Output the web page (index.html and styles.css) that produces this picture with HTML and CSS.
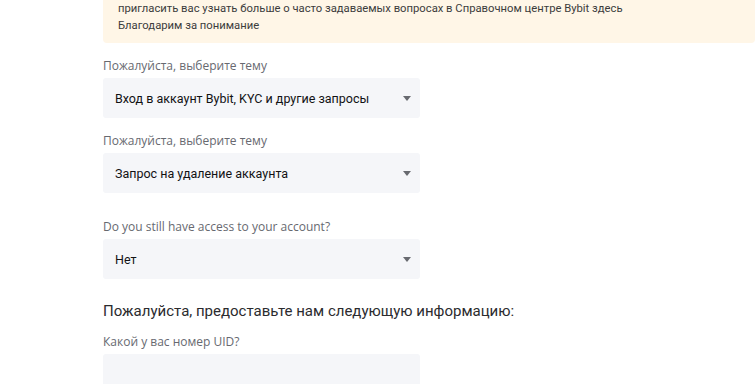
FILE: index.html
```html
<!DOCTYPE html>
<html lang="ru">
<head>
  <meta charset="UTF-8" />
  <title>Bybit — запрос в поддержку</title>
  <link rel="stylesheet" href="styles.css">
</head>
<body>
  <div class="page">
    <div class="notice">
      <p>пригласить вас узнать больше о часто задаваемых вопросах в Справочном центре Bybit здесь</p>
      <p>Благодарим за понимание</p>
    </div>

    <form class="form">
      <div class="field">
        <label>Пожалуйста, выберите тему</label>
        <div class="select">
          <span>Вход в аккаунт Bybit, KYC и другие запросы</span>
          <i class="caret"></i>
        </div>
      </div>

      <div class="field field-wide">
        <label>Пожалуйста, выберите тему</label>
        <div class="select">
          <span>Запрос на удаление аккаунта</span>
          <i class="caret"></i>
        </div>
      </div>

      <div class="field">
        <label>Do you still have access to your account?</label>
        <div class="select">
          <span>Нет</span>
          <i class="caret"></i>
        </div>
      </div>

      <h3>Пожалуйста, предоставьте нам следующую информацию:</h3>

      <div class="field">
        <label>Какой у вас номер UID?</label>
        <input type="text" class="input">
      </div>
    </form>
  </div>
</body>
</html>
```

FILE: styles.css
```css
body { margin: 0; background: #fff; font-family: Roboto, "Liberation Sans", sans-serif; color: #121214; }
.page { padding-left: 103px; }

.notice {
  padding: 0 16px 9px 15px;
  background-color: #fff6e7; border-radius: 0 0 4px 4px;
  font-size: 11.25px; line-height: 17px; color: #3c3c3c;
}
.notice p { margin: 0; }

.form { width: 317px; padding-top: 15px; }
.field { display: flex; flex-direction: column; gap: 4px; margin-bottom: 15px; }
.field-wide { margin-bottom: 26px; }
.field label { font-family: "Open Sans", Roboto, sans-serif; font-size: 12px; line-height: 16px; color: #676970; }

.select {
  height: 40px; display: flex; align-items: center; justify-content: space-between;
  padding: 0 9px 0 12px; background-color: #f5f6f9; border-radius: 3px;
  font-size: 12.5px;
}
.caret {
  width: 0; height: 0;
  border-left: 4px solid transparent; border-right: 4px solid transparent;
  border-top: 5px solid #686a70;
}

h3 {
  margin: 22px 0 13px; font-size: 15px; line-height: 20px; font-weight: 400;
  color: #2b2b2e; white-space: nowrap;
}

.input {
  height: 40px; border: none; background-color: #f5f6f9; border-radius: 3px;
  padding: 0 12px; font-size: 13px;
}
```
